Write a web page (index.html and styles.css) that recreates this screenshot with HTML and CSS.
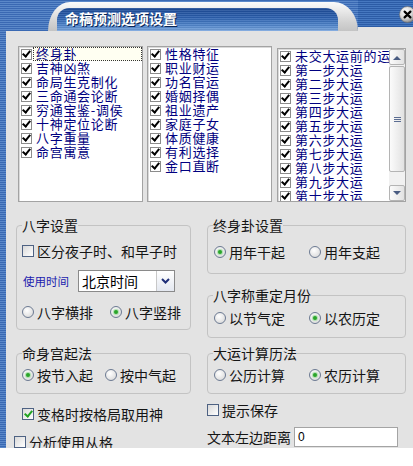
FILE: index.html
```html
<!DOCTYPE html>
<html lang="zh-CN">
<head>
<meta charset="utf-8">
<title>命稿预测选项设置</title>
<link rel="stylesheet" href="styles.css">
</head>
<body>
<div class="window">
  <div class="titlebar">
    <div class="tb-left"></div>
    <div class="tb-tab"><div class="tb-pill">命稿预测选项设置</div></div>
    <div class="tb-right">
      <svg class="close" width="17" height="17" viewBox="0 0 17 17">
        <defs><radialGradient id="cg" cx="38%" cy="32%" r="70%"><stop offset="0" stop-color="#ffffff"/><stop offset="0.6" stop-color="#d6d6d6"/><stop offset="1" stop-color="#8a8a8a"/></radialGradient></defs>
        <circle cx="8.5" cy="8.5" r="8" fill="url(#cg)" stroke="#6f6f6f" stroke-width="0.6"/>
        <path d="M5.6 5.6 L11.4 11.4 M11.4 5.6 L5.6 11.4" stroke="#000" stroke-width="2.2" stroke-linecap="round"/>
      </svg>
    </div>
  </div>
  <div class="panel">
    <div class="lists">
      <div class="list list-a">
        <div class="item focus"><span class="lcb"></span><span class="txt">终身卦</span></div>
        <div class="item"><span class="lcb"></span><span class="txt">吉神凶煞</span></div>
        <div class="item"><span class="lcb"></span><span class="txt">命局生克制化</span></div>
        <div class="item"><span class="lcb"></span><span class="txt">三命通会论断</span></div>
        <div class="item"><span class="lcb"></span><span class="txt">穷通宝鉴-调侯</span></div>
        <div class="item"><span class="lcb"></span><span class="txt">十神定位论断</span></div>
        <div class="item"><span class="lcb"></span><span class="txt">八字重量</span></div>
        <div class="item"><span class="lcb"></span><span class="txt">命宫寓意</span></div>
      </div>
      <div class="list list-b">
        <div class="item"><span class="lcb"></span><span class="txt">性格特征</span></div>
        <div class="item"><span class="lcb"></span><span class="txt">职业财运</span></div>
        <div class="item"><span class="lcb"></span><span class="txt">功名官运</span></div>
        <div class="item"><span class="lcb"></span><span class="txt">婚姻择偶</span></div>
        <div class="item"><span class="lcb"></span><span class="txt">祖业遗产</span></div>
        <div class="item"><span class="lcb"></span><span class="txt">家庭子女</span></div>
        <div class="item"><span class="lcb"></span><span class="txt">体质健康</span></div>
        <div class="item"><span class="lcb"></span><span class="txt">有利选择</span></div>
        <div class="item"><span class="lcb"></span><span class="txt">金口直断</span></div>
      </div>
      <div class="list list-c">
        <div class="items">
          <div class="item"><span class="lcb"></span><span class="txt">未交大运前的运</span></div>
          <div class="item"><span class="lcb"></span><span class="txt">第一步大运</span></div>
          <div class="item"><span class="lcb"></span><span class="txt">第二步大运</span></div>
          <div class="item"><span class="lcb"></span><span class="txt">第三步大运</span></div>
          <div class="item"><span class="lcb"></span><span class="txt">第四步大运</span></div>
          <div class="item"><span class="lcb"></span><span class="txt">第五步大运</span></div>
          <div class="item"><span class="lcb"></span><span class="txt">第六步大运</span></div>
          <div class="item"><span class="lcb"></span><span class="txt">第七步大运</span></div>
          <div class="item"><span class="lcb"></span><span class="txt">第八步大运</span></div>
          <div class="item"><span class="lcb"></span><span class="txt">第九步大运</span></div>
          <div class="item"><span class="lcb"></span><span class="txt">第十步大运</span></div>
        </div>
        <div class="sb">
          <div class="sb-btn"><svg width="8" height="5" viewBox="0 0 8 5"><path d="M0 5 L4 1 L8 5Z" fill="#4a5c82"/></svg></div>
          <div class="sb-thumb"><svg width="7" height="7" viewBox="0 0 7 7"><path d="M0 1.5h7M0 3.5h7M0 5.5h7" stroke="#5b6d92" stroke-width="1"/></svg></div>
          <div class="sb-track"></div>
          <div class="sb-btn"><svg width="8" height="5" viewBox="0 0 8 5"><path d="M0 0 L4 4 L8 0Z" fill="#4a5c82"/></svg></div>
        </div>
      </div>
    </div>

    <div class="settings">
      <div class="col col-left">
        <fieldset class="group g-bazi">
          <legend>八字设置</legend>
          <div class="row r-first"><span class="opt"><span class="cb"></span>区分夜子时、和早子时</span></div>
          <div class="selrow">
            <span class="sel-label">使用时间</span>
            <div class="select">
              <span class="sel-val">北京时间</span>
              <span class="sel-btn"><svg width="9" height="6" viewBox="0 0 9 6"><path d="M1 1 L4.5 4.5 L8 1" fill="none" stroke="#1f2f78" stroke-width="2"/></svg></span>
            </div>
          </div>
          <div class="row r-radio gap17">
            <span class="opt"><span class="radio"></span>八字横排</span>
            <span class="opt"><span class="radio on"></span>八字竖排</span>
          </div>
        </fieldset>
        <fieldset class="group g-minggong">
          <legend>命身宫起法</legend>
          <div class="row r-small gap12">
            <span class="opt"><span class="radio on"></span>按节入起</span>
            <span class="opt"><span class="radio"></span>按中气起</span>
          </div>
        </fieldset>
        <div class="row cb-biange"><span class="opt"><span class="cb on"></span>变格时按格局取用神</span></div>
        <div class="row cb-conge"><span class="opt"><span class="cb"></span>分析使用从格</span></div>
      </div>

      <div class="col col-right">
        <fieldset class="group g-gua">
          <legend>终身卦设置</legend>
          <div class="row r-gua gap24">
            <span class="opt"><span class="radio on"></span>用年干起</span>
            <span class="opt"><span class="radio"></span>用年支起</span>
          </div>
        </fieldset>
        <fieldset class="group g-month">
          <legend>八字称重定月份</legend>
          <div class="row r-month gap24">
            <span class="opt"><span class="radio"></span>以节气定</span>
            <span class="opt"><span class="radio on"></span>以农历定</span>
          </div>
        </fieldset>
        <fieldset class="group g-dayun">
          <legend>大运计算历法</legend>
          <div class="row r-small gap24">
            <span class="opt"><span class="radio"></span>公历计算</span>
            <span class="opt"><span class="radio on"></span>农历计算</span>
          </div>
        </fieldset>
        <div class="row cb-save"><span class="opt"><span class="cb"></span>提示保存</span></div>
        <div class="inrow">
          <span class="in-label">文本左边距离</span>
          <span class="input">0</span>
        </div>
      </div>
    </div>
  </div>
</div>
</body>
</html>
```

FILE: styles.css
```css
* { box-sizing: border-box; }

html, body {
  margin: 0;
  padding: 0;
  background: #ffffff;
}

body {
  font-family: "Noto Sans CJK SC", "Noto Sans", sans-serif;
  font-size: 14px;
  line-height: 14px;
  color: #151515;
}

.window {
  width: 413px;
  height: 448px;
  overflow: hidden;
  display: flex;
  flex-direction: column;
  background: repeating-linear-gradient(to bottom, #3a69b3 0 1px, #5a88c9 1px 2px);
}

/* ---------- title bar ---------- */
.titlebar {
  height: 31px;
  flex: none;
  display: flex;
}

.tb-left {
  width: 48px;
  flex: none;
}

.tb-tab {
  width: 310px;
  flex: none;
  margin-top: 2px;
  padding: 6px 0 0 9px;
  background: linear-gradient(#fbfbfb, #d2d2d2 70%, #c4c4c4);
  border-radius: 22px 24px 0 0 / 29px 29px 0 0;
}

.tb-pill {
  width: 281px;
  height: 23px;
  padding: 3px 0 0 8px;
  border-radius: 12px 12px 0 0;
  background:
    repeating-linear-gradient(to bottom, rgba(255,255,255,0.10) 0 1px, rgba(0,0,0,0.06) 1px 2px),
    linear-gradient(#1c4a95, #2b5fae 40%, #4f84ca 75%, #79a5dd);
  color: #ffffff;
  font-weight: bold;
  text-shadow: 1px 1px 0 #0b2656;
}

.tb-right {
  flex: 1;
  display: flex;
  justify-content: flex-end;
  align-items: flex-start;
  padding-top: 6px;
  border-bottom: 4px solid #e3e3e3;
  background: repeating-linear-gradient(to bottom, #2c5ca6 0 1px, #4678c0 1px 2px);
}

.close {
  margin-right: -3px;
  flex: none;
}

/* ---------- panel ---------- */
.panel {
  flex: 1;
  margin-left: 6px;
  padding: 15px 0 0 10px;
  background: #e3e3e3;
}

.lists {
  display: flex;
  align-items: flex-start;
  margin-left: 2px;
}

.list {
  background: #ffffff;
  border: 1px solid #a3a3a3;
  box-shadow: inset 1px 1px 0 #dadada;
  overflow: hidden;
  height: 156px;
}

.list-a { width: 125px; }
.list-b { width: 125px; margin-left: 4px; }
.list-c {
  width: 129px;
  margin-left: 5px;
  margin-top: 2px;
  height: 154px;
  display: flex;
}

.items {
  flex: 1;
  min-width: 0;
  overflow: hidden;
}

.item {
  display: flex;
  align-items: center;
  height: 14px;
  padding-left: 2px;
  color: #000080;
  white-space: nowrap;
}

.lcb {
  width: 11px;
  height: 11px;
  flex: none;
  margin-right: 1px;
  border: 1px solid #8c8c8c;
  background: #ffffff;
  display: flex;
  align-items: center;
  justify-content: center;
}

.lcb::after {
  content: "";
  width: 3px;
  height: 6px;
  margin-top: -2px;
  border: solid #000000;
  border-width: 0 2px 2px 0;
  transform: rotate(40deg);
}

.txt {
  flex: 1;
  height: 14px;
  padding-left: 3px;
  font-size: 13px;
  line-height: 14px;
  letter-spacing: 0.7px;
}

.focus .txt {
  background: #fffff2;
  outline: 1px dotted #333333;
  outline-offset: -1px;
}

/* scrollbar */
.sb {
  width: 16px;
  flex: none;
  display: flex;
  flex-direction: column;
  background: #f1f1f1;
}

.sb-btn, .sb-thumb {
  border: 1px solid #b4b4b4;
  border-radius: 2px;
  background: linear-gradient(to right, #fbfbfb, #e2e2e2);
  display: flex;
  align-items: center;
  justify-content: center;
}

.sb-btn { height: 16px; flex: none; }

.sb-thumb {
  height: 106px;
  flex: none;
  margin-top: 1px;
}

.sb-track { flex: 1; }

/* ---------- settings ---------- */
.settings {
  display: flex;
  gap: 16px;
  margin-top: 16px;
}

.col {
  display: flex;
  flex-direction: column;
}

.col-left { width: 175px; }
.col-right { width: 199px; }

.group {
  margin: 0;
  padding: 0 5px;
  min-width: 0;
  border: 1px solid #c3c3c3;
  border-radius: 4px;
}

.group legend {
  padding: 0;
  font-size: 14px;
  line-height: 14px;
  color: #151515;
}

.g-bazi { height: 112px; }
.g-minggong { height: 48px; margin-top: 16px; }
.g-gua { height: 56px; }
.g-month { height: 50px; margin-top: 14px; }
.g-dayun { height: 48px; margin-top: 8px; }

.row {
  display: flex;
  align-items: center;
  height: 14px;
}

.gap12 { gap: 12px; }
.gap17 { gap: 17px; }
.gap24 { gap: 24px; padding-left: 1px; }

.r-first { margin-top: 12px; }
.r-radio { margin-top: 13px; }
.r-small { margin-top: 8px; }
.r-gua { margin-top: 13px; }
.r-month { margin-top: 9px; }

.opt {
  display: flex;
  align-items: center;
  gap: 3px;
  white-space: nowrap;
}

.cb {
  width: 12px;
  height: 12px;
  flex: none;
  border: 1px solid #4e6283;
  background: linear-gradient(135deg, #d9d9d9, #ffffff);
  display: flex;
  align-items: center;
  justify-content: center;
}

.cb.on::after {
  content: "";
  width: 3px;
  height: 6px;
  margin-top: -2px;
  border: solid #22a322;
  border-width: 0 2px 2px 0;
  transform: rotate(40deg);
}

.radio {
  width: 12px;
  height: 12px;
  flex: none;
  border-radius: 50%;
  border: 1px solid #6c7a92;
  background: radial-gradient(circle at 40% 35%, #ffffff, #dcdcdc 80%);
  display: flex;
  align-items: center;
  justify-content: center;
}

.radio.on::after {
  content: "";
  width: 4px;
  height: 4px;
  border-radius: 50%;
  background: #2aa52a;
  box-shadow: 0 0 1px 1px #a8dca8;
}

.selrow {
  display: flex;
  align-items: center;
  height: 22px;
  margin-top: 12px;
  padding-left: 1px;
}

.sel-label {
  width: 46px;
  margin-right: 9px;
  font-size: 11.5px;
  color: #1c1cae;
  white-space: nowrap;
}

.select {
  width: 97px;
  height: 22px;
  display: flex;
  border: 1px solid #8a8a8a;
  background: #ffffff;
}

.sel-val {
  flex: 1;
  padding: 3px 0 0 3px;
  color: #000000;
}

.sel-btn {
  width: 18px;
  flex: none;
  border-left: 1px solid #c8c8c8;
  background: linear-gradient(#ffffff, #e4e8f0);
  display: flex;
  align-items: center;
  justify-content: center;
}

.cb-biange { margin-top: 13px; padding-left: 6px; }
.cb-conge { margin-top: 14px; margin-left: -2px; }
.cb-save { margin-top: 9px; }

.inrow {
  display: flex;
  align-items: center;
  height: 20px;
  margin-top: 10px;
}

.in-label { white-space: nowrap; }

.input {
  width: 104px;
  height: 20px;
  margin-left: 3px;
  padding: 3px 0 0 3px;
  border: 1px solid #a4a4a4;
  background: #ffffff;
  font-family: "Liberation Sans", sans-serif;
  font-size: 12px;
  line-height: 12px;
  color: #000000;
}
```
